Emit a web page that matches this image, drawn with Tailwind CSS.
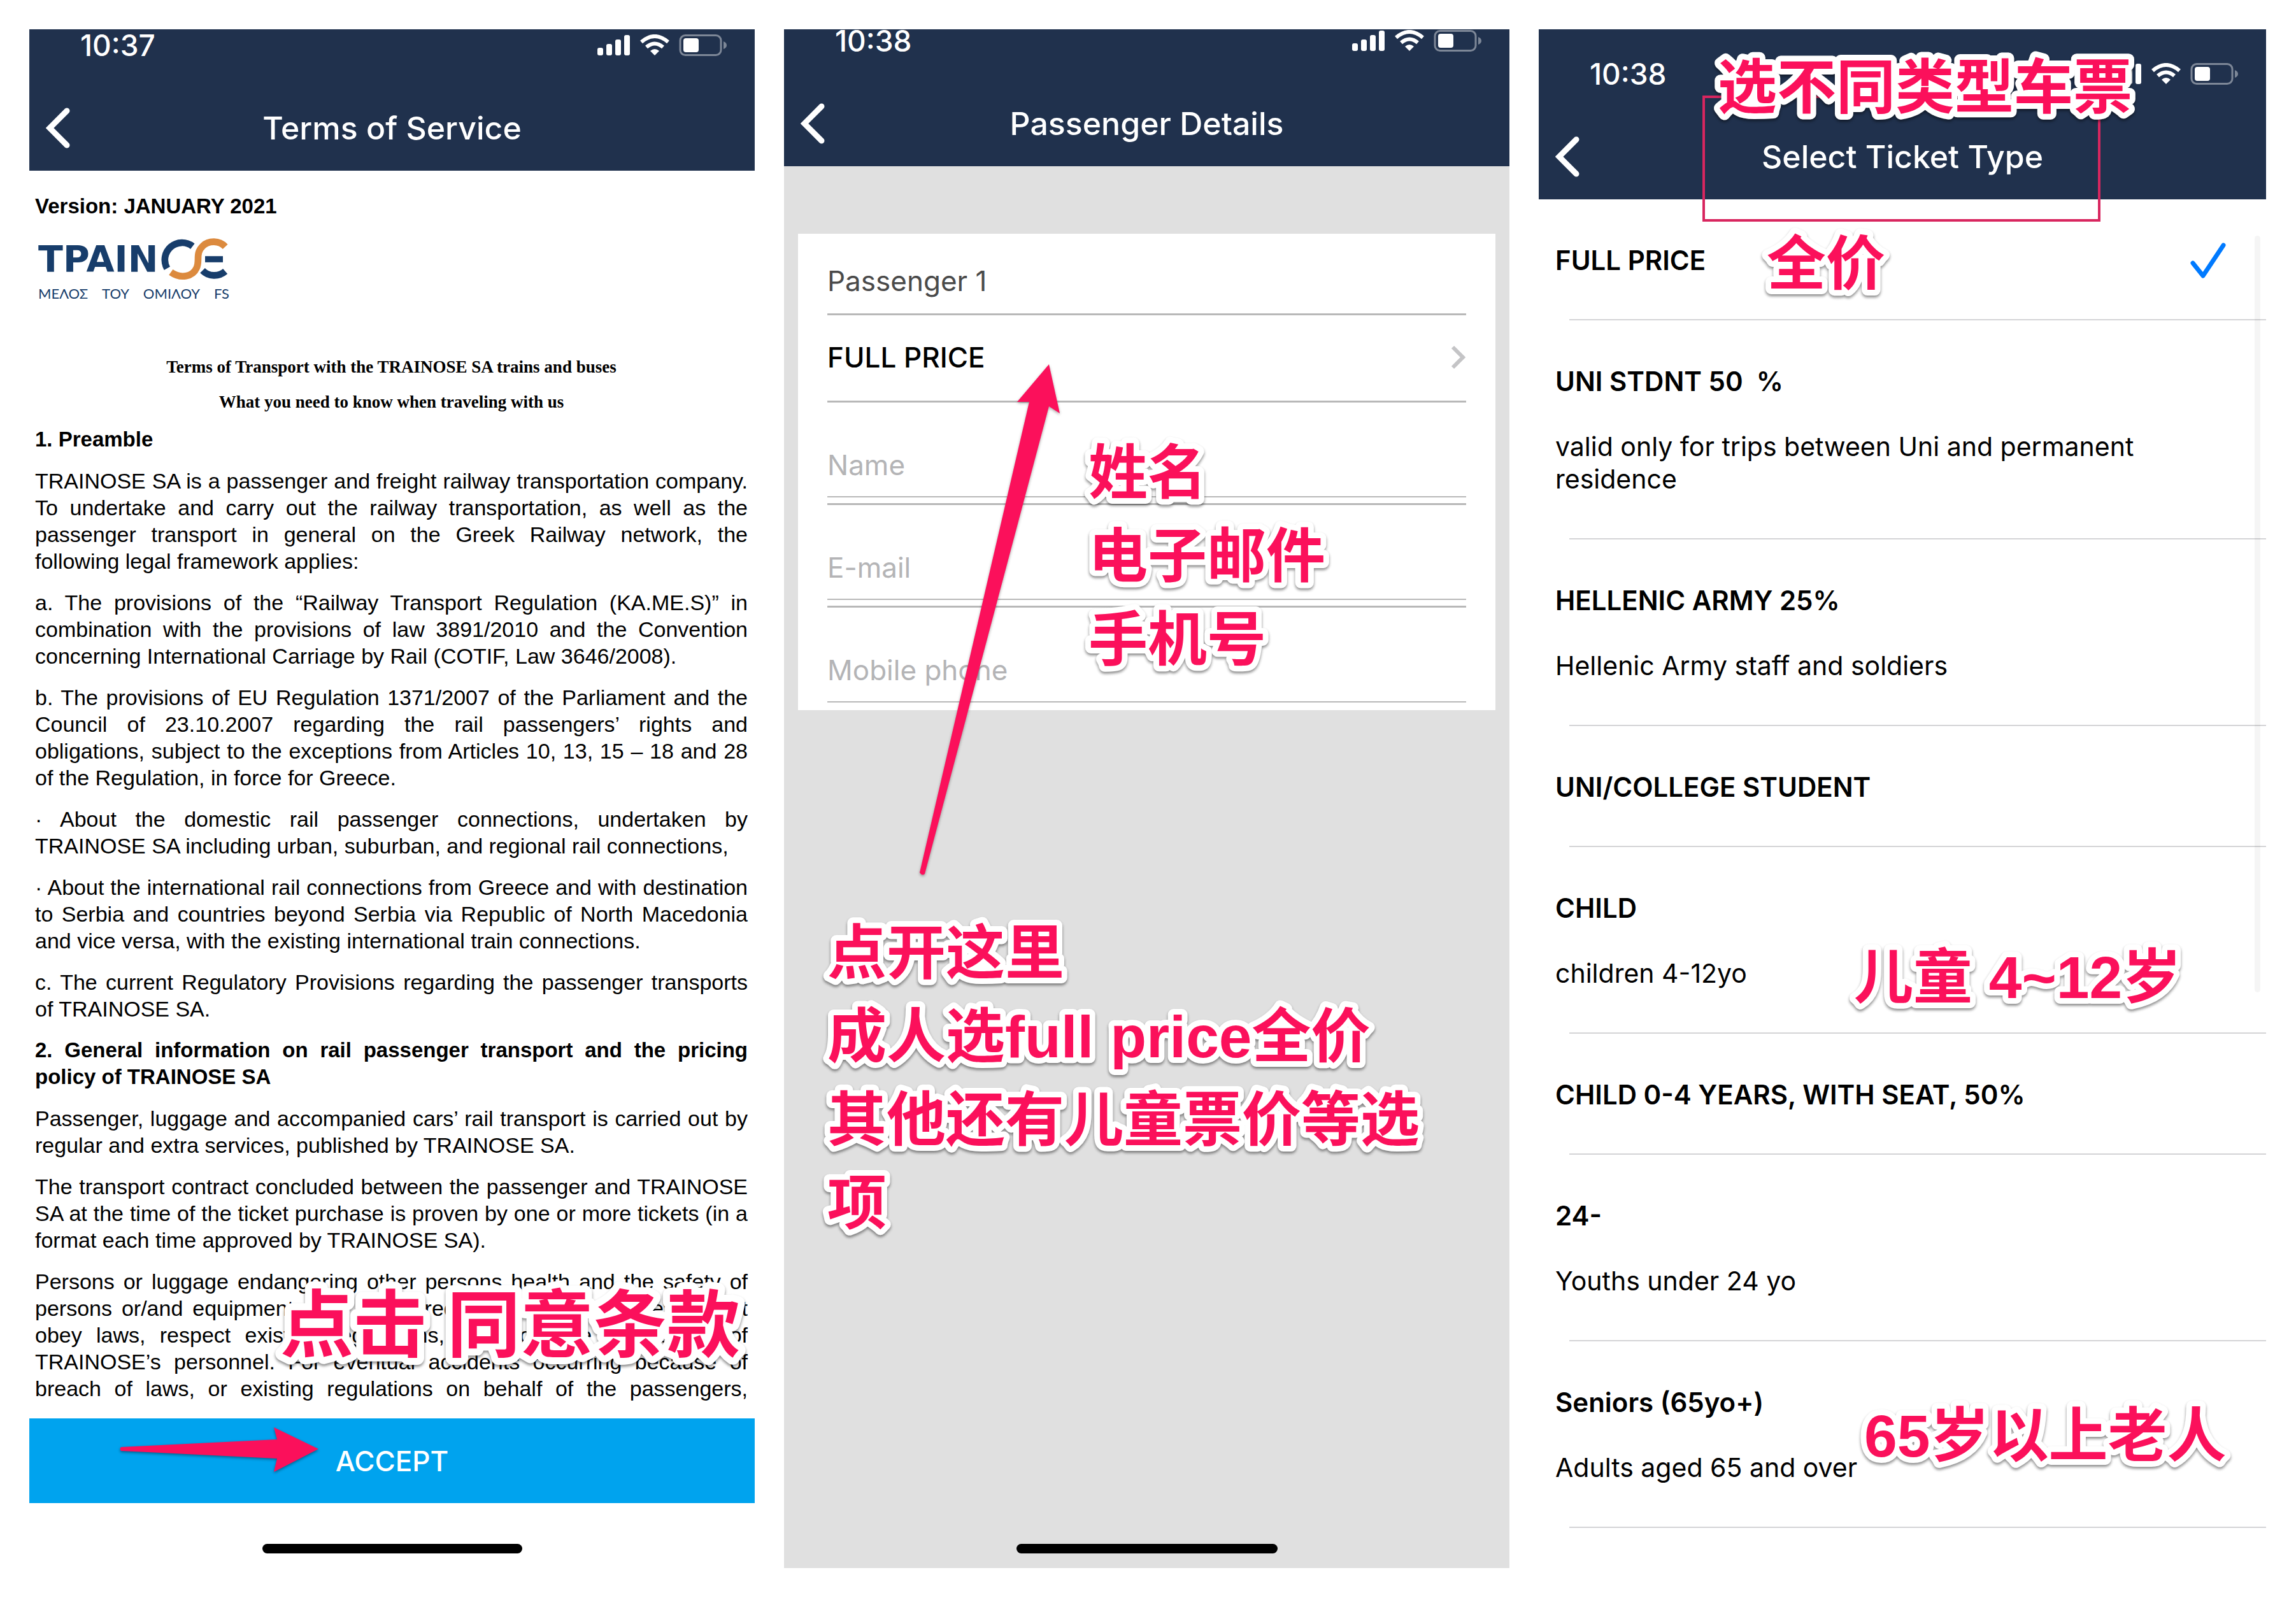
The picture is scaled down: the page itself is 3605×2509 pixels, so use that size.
<!DOCTYPE html>
<html lang="en">
<head>
<meta charset="utf-8">
<title>Ticket booking guide</title>
<script src="https://cdn.jsdelivr.net/npm/@tailwindcss/browser@4"></script>
</head>
<body class="bg-white font-['Inter',sans-serif] text-black">
<svg class="hidden" aria-hidden="true">
  <symbol id="status" viewBox="0 0 204 34">
    <g fill="#fff">
      <rect x="0" y="21" width="9" height="12" rx="3"/>
      <rect x="14" y="15" width="9" height="18" rx="3"/>
      <rect x="28" y="8" width="9" height="25" rx="3"/>
      <rect x="42" y="1" width="9" height="32" rx="3"/>
      <rect x="135" y="6" width="24" height="22" rx="4"/>
      <path d="M90 33l-7-7q7-6 14 0z"/>
    </g>
    <g fill="none" stroke="#fff" stroke-width="6">
      <path d="M69 12q21-18 42 0"/>
      <path d="M77 20q13-11 26 0"/>
    </g>
    <rect x="130" y="1.500" width="64" height="31" rx="8" fill="none" stroke="#fff" stroke-opacity=".42" stroke-width="3"/>
    <path d="M198 11q5 2 5 6t-5 6z" fill="#fff" fill-opacity=".42"/>
  </symbol>
  <symbol id="back" viewBox="0 0 38 64">
    <path d="M33 5L6 32l27 27" fill="none" stroke="#fff" stroke-width="9" stroke-linecap="round" stroke-linejoin="miter"/>
  </symbol>
</svg>

<main class="grid min-h-screen grid-cols-[1139fr_1139fr_1142fr] gap-[46px] pb-[47px] pl-[46px] pr-[47px] pt-[46px]">

  <!-- Terms of service -->
  <section class="relative flex min-w-0 flex-col">
    <header class="bg-[#20314d] text-white">
      <div class="flex h-[50px] items-center justify-between pl-20 pr-[43px]">
        <time class="text-[46px] font-medium leading-none">10:37</time>
        <svg class="h-[34px] w-[204px]"><use href="#status"/></svg>
      </div>
      <div class="mt-10 flex h-[132px] items-center px-[26px] pb-[2px]">
        <button class="w-[38px]" aria-label="Back"><svg class="h-[64px] w-[38px]"><use href="#back"/></svg></button>
        <h1 class="flex-1 text-center text-[50px] font-medium leading-none">Terms of Service</h1>
        <span class="w-[38px]"></span>
      </div>
    </header>

    <div class="flex flex-col pl-[9px] pr-[11px] pt-[35px] font-['Liberation_Sans',sans-serif] text-[34px] leading-[42px]">
      <p class="text-[33px] font-bold">Version: JANUARY 2021</p>
      <div class="mt-[26px] ml-[5px] w-[300px] text-[#173d6b]">
        <div class="flex h-[72px] items-center">
          <span class="w-[192px] font-['DejaVu_Sans',sans-serif] text-[57px] font-bold leading-[72px]">TPAIN</span>
          <svg class="h-[66px] w-[106px]" viewBox="638 46 318 198" fill="none" stroke-width="32">
            <path d="M669 188A81 81 0 0 1 789 84" stroke="#173d6b"/>
            <path d="M943 86C915 56 865 56 838 82C800 118 825 150 808 186C790 226 735 240 687 206" stroke="#dc8a3e"/>
            <path d="M848 145h84" stroke="#173d6b" stroke-width="29"/>
            <path d="M836 198A78 78 0 0 0 943 202" stroke="#173d6b"/>
          </svg>
        </div>
        <div class="mt-[3px] flex justify-between font-['Lato',sans-serif] text-[22px] leading-[30px]"><span>ΜΕΛΟΣ</span><span>ΤΟΥ</span><span>ΟΜΙΛΟΥ</span><span>FS</span></div>
      </div>
      <div class="mt-[79px] flex flex-col gap-[13px] text-center font-['Liberation_Serif',serif] text-[27px] font-bold">
        <p>Terms of Transport with the TRAINOSE SA trains and buses</p>
        <p>What you need to know when traveling with us</p>
      </div>
      <div class="mt-[17px] flex flex-col gap-[23px] text-justify">
        <h2 class="text-[33px] font-bold">1. Preamble</h2>
        <p>TRAINOSE SA is a passenger and freight railway transportation company. To undertake and carry out the railway transportation, as well as the passenger transport in general on the Greek Railway network, the following legal framework applies:</p>
        <p>a. The provisions of the “Railway Transport Regulation (KA.ME.S)” in combination with the provisions of law 3891/2010 and the Convention concerning International Carriage by Rail (COTIF, Law 3646/2008).</p>
        <p>b. The provisions of EU Regulation 1371/2007 of the Parliament and the Council of 23.10.2007 regarding the rail passengers’ rights and obligations, subject to the exceptions from Articles 10, 13, 15 – 18 and 28 of the Regulation, in force for Greece.</p>
        <p>· About the domestic rail passenger connections, undertaken by TRAINOSE SA including urban, suburban, and regional rail connections,</p>
        <p>· About the international rail connections from Greece and with destination to Serbia and countries beyond Serbia via Republic of North Macedonia and vice versa, with the existing international train connections.</p>
        <p>c. The current Regulatory Provisions regarding the passenger transports of TRAINOSE SA.</p>
        <h2 class="text-[33px] font-bold">2. General information on rail passenger transport and the pricing policy of TRAINOSE SA</h2>
        <p>Passenger, luggage and accompanied cars’ rail transport is carried out by regular and extra services, published by TRAINOSE SA.</p>
        <p>The transport contract concluded between the passenger and TRAINOSE SA at the time of the ticket purchase is proven by one or more tickets (in a format each time approved by TRAINOSE SA).</p>
        <p class="[text-align-last:justify]">Persons or luggage endangering other persons health and the safety of<br>persons or/and equipment, may be barred from transport if they do not<br>obey laws, respect existing regulations, or follow the instructions of<br>TRAINOSE’s personnel. For eventual accidents occurring because of<br>breach of laws, or existing regulations on behalf of the passengers,</p>
      </div>
    </div>

    <footer class="mt-auto">
      <button class="block h-[133px] w-full bg-[#00a3ee] text-center text-[44px] font-medium text-white">ACCEPT</button>
      <div class="flex h-[102px] items-end justify-center pb-[23px]"><span class="h-[15px] w-[408px] rounded-full bg-black"></span></div>
    </footer>

    <svg class="absolute left-[394px] top-[1970px] h-[131px] w-[730px] overflow-visible fill-[#fb105b] stroke-white stroke-[22px] font-['Liberation_Sans','Noto_Sans_CJK_SC',sans-serif] text-[115px] font-bold [paint-order:stroke_fill] [stroke-linejoin:round] drop-shadow-[0_3px_2px_rgba(0,0,0,0.45)]" lang="zh-CN"><text x="0" y="105">点击 同意条款</text></svg>
    <svg class="absolute left-[140px] top-[2190px] h-[80px] w-[320px] drop-shadow-[0_2px_2px_rgba(0,0,0,0.4)]" viewBox="140 2190 320 80"><path d="M144 2226L389 2214L384 2195L454 2229L384 2265L389 2244L144 2232Q141 2229 144 2226z" fill="#fb105b"/></svg>
  </section>

  <!-- Passenger details -->
  <section class="relative flex min-w-0 flex-col bg-[#e0e0e0]">
    <header class="bg-[#20314d] text-white">
      <div class="flex h-[36px] items-center justify-between pl-20 pr-[43px]">
        <time class="text-[46px] font-medium leading-none">10:38</time>
        <svg class="h-[34px] w-[204px]"><use href="#status"/></svg>
      </div>
      <div class="mt-[47px] flex h-[132px] items-center px-[26px] pb-[2px]">
        <button class="w-[38px]" aria-label="Back"><svg class="h-[64px] w-[38px]"><use href="#back"/></svg></button>
        <h1 class="flex-1 text-center text-[50px] font-medium leading-none">Passenger Details</h1>
        <span class="w-[38px]"></span>
      </div>
    </header>

    <form class="mx-[22px] mt-[106px] bg-white px-[46px] pb-3 text-[44px]">
      <h2 class="flex h-[128px] items-center border-b-3 border-[#b8b8b8] pt-[22px] text-[#4a4a4a]">Passenger 1</h2>
      <button type="button" class="flex h-[137px] w-full items-center justify-between border-b-3 border-[#b8b8b8] pb-[2px] font-medium">
        FULL PRICE
        <svg class="h-[38px] w-[24px]" viewBox="0 0 24 38" fill="none" stroke="#c4c4c6" stroke-width="6"><path d="M3 3l16 16L3 35"/></svg>
      </button>
      <div class="flex flex-col gap-[9px]">
        <input aria-label="Name" placeholder="Name" class="h-[149px] w-full border-b-2 border-[#b8b8b8] pt-[48px] outline-none placeholder:text-[#b4b4b6]">
        <input aria-label="E-mail" type="email" placeholder="E-mail" class="h-[152px] w-full border-b-2 border-t-3 border-[#b8b8b8] pt-[48px] outline-none placeholder:text-[#b4b4b6]">
        <input aria-label="Mobile phone" type="tel" placeholder="Mobile phone" class="h-[152px] w-full border-b-2 border-t-3 border-[#b8b8b8] pt-[48px] outline-none placeholder:text-[#b4b4b6]">
      </div>
    </form>

    <div class="mt-auto flex items-end justify-center pb-[23px]"><span class="h-[15px] w-[410px] rounded-full bg-black"></span></div>

    <svg class="absolute left-[200px] top-[510px] h-[830px] w-[250px] drop-shadow-[0_2px_2px_rgba(0,0,0,0.35)]" viewBox="200 510 250 830"><path d="M416 526L433 603L416 592L221 1326Q217 1330 213 1324L385 585L366 585z" fill="#fb105b"/></svg>
    <svg class="absolute left-[478px] top-[631px] h-[393px] w-[380px] overflow-visible fill-[#fb105b] stroke-white stroke-[18px] font-['Liberation_Sans','Noto_Sans_CJK_SC',sans-serif] text-[93px] font-bold [paint-order:stroke_fill] [stroke-linejoin:round] drop-shadow-[0_3px_2px_rgba(0,0,0,0.45)]" lang="zh-CN"><text x="0" y="98">姓名</text><text x="0" y="229">电子邮件</text><text x="0" y="360">手机号</text></svg>
    <svg class="absolute left-[68px] top-[1385px] h-[524px] w-[960px] overflow-visible fill-[#fb105b] stroke-white stroke-[18px] font-['Liberation_Sans','Noto_Sans_CJK_SC',sans-serif] text-[93px] font-bold [paint-order:stroke_fill] [stroke-linejoin:round] drop-shadow-[0_3px_2px_rgba(0,0,0,0.45)]" lang="zh-CN"><text x="0" y="98">点开这里</text><text x="0" y="229">成人选full price全价</text><text x="0" y="360">其他还有儿童票价等选</text><text x="0" y="491">项</text></svg>
  </section>

  <!-- Ticket type -->
  <section class="relative flex min-w-0 flex-col">
    <header class="bg-[#20314d] text-white">
      <div class="flex h-[135px] items-center justify-between pl-20 pr-[43px] pt-1">
        <time class="text-[46px] font-medium leading-none">10:38</time>
        <svg class="h-[34px] w-[204px]"><use href="#status"/></svg>
      </div>
      <div class="flex h-[132px] items-center px-[26px] pb-[2px]">
        <button class="w-[38px]" aria-label="Back"><svg class="h-[64px] w-[38px]"><use href="#back"/></svg></button>
        <h1 class="flex-1 text-center text-[50px] font-medium leading-none">Select Ticket Type</h1>
        <span class="w-[38px]"></span>
      </div>
    </header>

    <ul class="text-[41px] leading-[51px]">
      <li>
        <button class="flex w-full items-center justify-between pb-[67px] pl-[26px] pr-[62px] pt-[70px] text-left">
          <span class="text-[42px] font-semibold">FULL PRICE</span>
          <svg class="-my-1 h-[58px] w-[58px]" viewBox="0 0 58 58" fill="none" stroke="#007aff" stroke-width="7" stroke-linecap="round" stroke-linejoin="round"><path d="M5 33l16 20L53 5"/></svg>
        </button>
        <div class="ml-12 h-[2px] bg-[#d4d4d6]"></div>
      </li>
      <li>
        <button class="flex w-full flex-col gap-[52px] pb-[67px] pl-[26px] pr-[160px] pt-[70px] text-left">
          <span class="whitespace-pre text-[42px] font-semibold">UNI STDNT 50  %</span>
          <span>valid only for trips between Uni and permanent residence</span>
        </button>
        <div class="ml-12 h-[2px] bg-[#d4d4d6]"></div>
      </li>
      <li>
        <button class="flex w-full flex-col gap-[52px] pb-[67px] pl-[26px] pr-[160px] pt-[70px] text-left">
          <span class="text-[42px] font-semibold">HELLENIC ARMY 25%</span>
          <span>Hellenic Army staff and soldiers</span>
        </button>
        <div class="ml-12 h-[2px] bg-[#d4d4d6]"></div>
      </li>
      <li>
        <button class="flex w-full flex-col pb-[67px] pl-[26px] pr-[160px] pt-[70px] text-left">
          <span class="text-[42px] font-semibold">UNI/COLLEGE STUDENT</span>
        </button>
        <div class="ml-12 h-[2px] bg-[#d4d4d6]"></div>
      </li>
      <li>
        <button class="flex w-full flex-col gap-[52px] pb-[67px] pl-[26px] pr-[160px] pt-[70px] text-left">
          <span class="text-[42px] font-semibold">CHILD</span>
          <span>children 4-12yo</span>
        </button>
        <div class="ml-12 h-[2px] bg-[#d4d4d6]"></div>
      </li>
      <li>
        <button class="flex w-full flex-col pb-[67px] pl-[26px] pr-[160px] pt-[70px] text-left">
          <span class="text-[42px] font-semibold">CHILD 0-4 YEARS, WITH SEAT, 50%</span>
        </button>
        <div class="ml-12 h-[2px] bg-[#d4d4d6]"></div>
      </li>
      <li>
        <button class="flex w-full flex-col gap-[52px] pb-[67px] pl-[26px] pr-[160px] pt-[70px] text-left">
          <span class="text-[42px] font-semibold">24-</span>
          <span>Youths under 24 yo</span>
        </button>
        <div class="ml-12 h-[2px] bg-[#d4d4d6]"></div>
      </li>
      <li>
        <button class="flex w-full flex-col gap-[52px] pb-[67px] pl-[26px] pr-[160px] pt-[70px] text-left">
          <span class="text-[42px] font-semibold">Seniors (65yo+)</span>
          <span>Adults aged 65 and over</span>
        </button>
        <div class="ml-12 h-[2px] bg-[#d4d4d6]"></div>
      </li>
    </ul>

    <div class="absolute right-[9px] top-[324px] h-[1188px] w-[9px] rounded-full bg-black/4"></div>
    <div class="absolute left-[257px] top-[104px] h-[198px] w-[625px] border-4 border-[#d8265f]"></div>
    <svg class="absolute left-[281px] top-[26px] h-[131px] w-[660px] overflow-visible fill-[#fb105b] stroke-white stroke-[18px] font-['Liberation_Sans','Noto_Sans_CJK_SC',sans-serif] text-[93px] font-bold [paint-order:stroke_fill] [stroke-linejoin:round] drop-shadow-[0_3px_2px_rgba(0,0,0,0.45)]" lang="zh-CN"><text x="0" y="98">选不同类型车票</text></svg>
    <svg class="absolute left-[358px] top-[303px] h-[131px] w-[190px] overflow-visible fill-[#fb105b] stroke-white stroke-[18px] font-['Liberation_Sans','Noto_Sans_CJK_SC',sans-serif] text-[93px] font-bold [paint-order:stroke_fill] [stroke-linejoin:round] drop-shadow-[0_3px_2px_rgba(0,0,0,0.45)]" lang="zh-CN"><text x="0" y="98">全价</text></svg>
    <svg class="absolute left-[495px] top-[1423px] h-[131px] w-[520px] overflow-visible fill-[#fb105b] stroke-white stroke-[18px] font-['Liberation_Sans','Noto_Sans_CJK_SC',sans-serif] text-[93px] font-bold [paint-order:stroke_fill] [stroke-linejoin:round] drop-shadow-[0_3px_2px_rgba(0,0,0,0.45)]" lang="zh-CN"><text x="0" y="98">儿童 4~12岁</text></svg>
    <svg class="absolute left-[511px] top-[2143px] h-[131px] w-[580px] overflow-visible fill-[#fb105b] stroke-white stroke-[18px] font-['Liberation_Sans','Noto_Sans_CJK_SC',sans-serif] text-[93px] font-bold [paint-order:stroke_fill] [stroke-linejoin:round] drop-shadow-[0_3px_2px_rgba(0,0,0,0.45)]" lang="zh-CN"><text x="0" y="98">65岁以上老人</text></svg>
  </section>
</main>
</body>
</html>
